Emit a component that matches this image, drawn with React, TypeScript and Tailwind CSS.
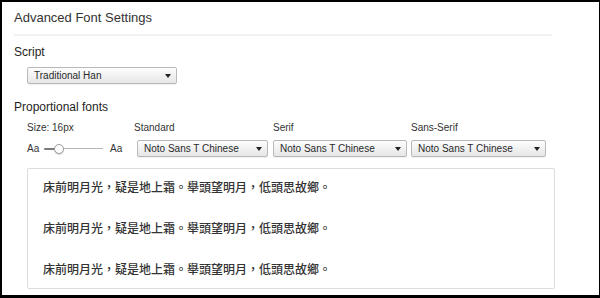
import React from 'react';

const fontStack = { fontFamily: '"Liberation Sans", "Noto Sans CJK TC", sans-serif' };
const cjkStack = { fontFamily: '"Noto Sans CJK TC", "Liberation Sans", sans-serif' };

const poem = '床前明月光，疑是地上霜。舉頭望明月，低頭思故鄉。';

const Select: React.FC<{ value: string; className?: string }> = ({ value, className = '' }) => (
  <div
    className={`relative h-[17px] flex items-center pl-[6px] rounded-[2px] border border-[#b9b9b9] bg-gradient-to-b from-[#fdfdfd] to-[#e6e6e6] shadow-[0_1px_0_rgba(0,0,0,0.06)] text-[10px] text-[#2a2a2a] ${className}`}
  >
    <span className="leading-none">{value}</span>
    <span className="absolute right-[5px] top-[6px] w-0 h-0 border-l-[3px] border-r-[3px] border-t-[4px] border-l-transparent border-r-transparent border-t-[#222]" />
  </div>
);

const SizeSlider: React.FC = () => (
  <div className="flex items-center h-[17px] text-[10px] text-[#333]">
    <span className="w-[17px] leading-none">Aa</span>
    <div className="relative w-[59px] h-[10px] flex items-center">
      <div className="h-[2px] w-[15px] bg-[#7a7a7a] rounded-l-full" />
      <div className="h-[1px] flex-1 bg-[#b5b5b5]" />
      <div className="absolute left-[10px] top-0 w-[10px] h-[10px] rounded-full bg-white border border-[#9a9a9a] shadow-[0_1px_1px_rgba(0,0,0,0.15)]" />
    </div>
    <span className="ml-[7px] leading-none">Aa</span>
  </div>
);

export default function App() {
  return (
    <div
      className="w-[600px] h-[298px] overflow-hidden bg-white border-black border-t-2 border-l-2 border-r border-b-[3px]"
      style={fontStack}
    >
      <div className="pl-[12px] pr-[44px]">
        <h2 className="pt-[8px] text-[13px] leading-[16px] text-[#333]">Advanced Font Settings</h2>
        <div className="mt-[8px] mr-[3px] h-[2px] bg-[#f1f1f1]" />

        <div className="mt-[9px] text-[12px] leading-[15px] text-[#1e1e1e]">Script</div>
        <Select value="Traditional Han" className="mt-[7px] ml-[13px] w-[150px]" />

        <div className="mt-[16px] text-[12px] leading-[15px] text-[#1e1e1e]">Proportional fonts</div>

        <div className="ml-[13px]">
          <div className="mt-[7px] flex text-[10px] leading-[12px] text-[#333]">
            <div className="w-[110px]">Size: 16px</div>
            <div className="w-[131px] -ml-[3px]">Standard</div>
            <div className="w-[134px] ml-[8px]">Serif</div>
            <div className="w-[135px] ml-[4px]">Sans-Serif</div>
          </div>

          <div className="mt-[6px] flex items-center">
            <div className="w-[110px]">
              <SizeSlider />
            </div>
            <Select value="Noto Sans T Chinese" className="w-[131px]" />
            <Select value="Noto Sans T Chinese" className="w-[134px] ml-[5px]" />
            <Select value="Noto Sans T Chinese" className="w-[135px] ml-[4px]" />
          </div>

          <div
            lang="zh-Hant"
            className="mt-[11px] h-[121px] rounded-[2px] border border-[#dcdcdc] pl-[15px] pt-[8px] flex flex-col gap-[21px] text-[12px] leading-[20px] font-medium text-[#333]"
            style={cjkStack}
          >
            <div>{poem}</div>
            <div>{poem}</div>
            <div>{poem}</div>
          </div>
        </div>
      </div>
    </div>
  );
}
